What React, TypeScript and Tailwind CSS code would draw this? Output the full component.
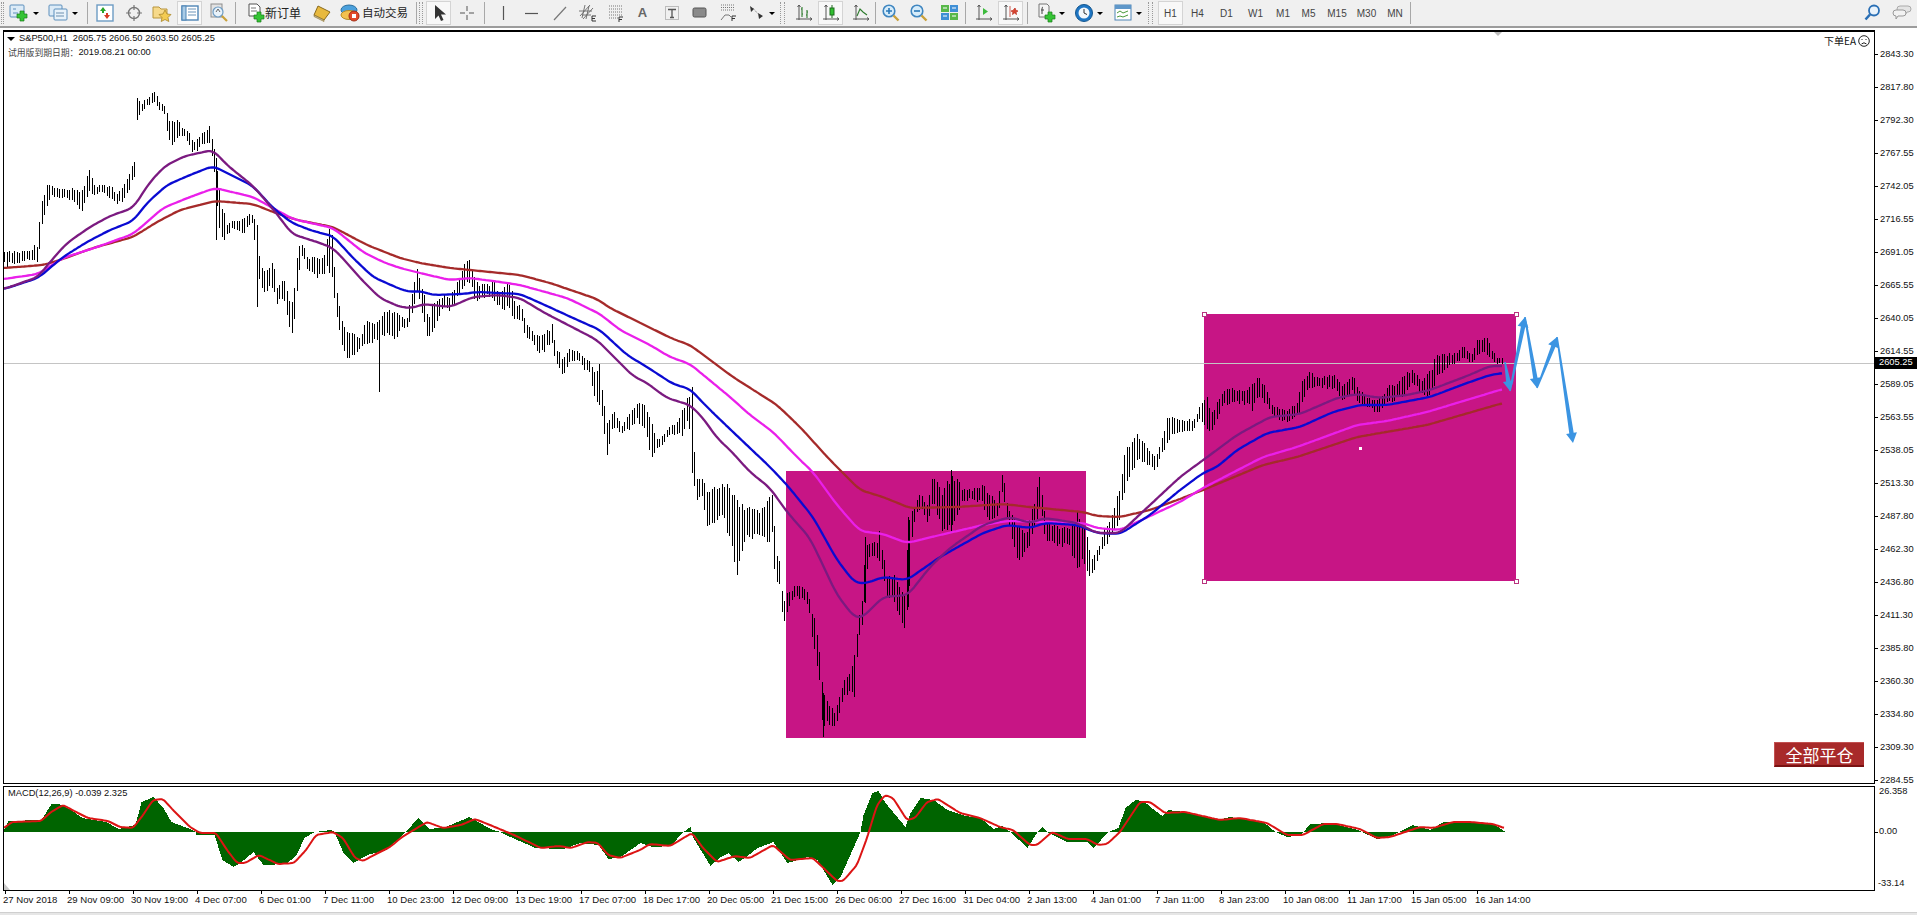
import React from 'react';

type Pt = number[];

// traced from the chart: [x, high, low] in page pixels
const BARS: Pt[] = [
  [4,252,265],[20,252,263],[30,250,258],[37,244,262],[40,205,245],[43,195,218],[47,183,208],[50,185,195],[60,190,197],[70,190,200],[82,190,210],[89,170,193],[95,187,193],[102,185,190],[110,187,198],[117,193,203],[122,188,202],[128,178,193],[134,160,177],
  [137,98,120],[140,103,113],[147,100,105],[154,93,103],[160,103,110],[165,108,117],[168,117,140],[172,123,145],[178,120,137],[183,130,135],[190,135,147],[193,143,153],[200,137,147],[204,132,143],[209,127,145],[213,145,160],[216,158,200],[220,200,238],[223,207,245],[227,223,233],[233,222,228],[243,218,232],[253,215,222],
  [257,225,307],[259,257,280],[263,273,292],[273,262,287],[277,287,303],[283,280,297],[288,297,320],[291,310,340],[295,280,313],[298,243,280],[302,243,255],[307,257,267],[315,255,280],[323,260,273],[328,230,270],[332,227,283],[335,283,307],[340,307,340],[345,330,358],[355,335,355],[360,337,347],[367,320,343],[377,323,340],[387,307,337],[397,313,337],
  [400,317,328],[407,317,328],[412,290,317],[417,270,290],[425,297,328],[428,320,342],[433,303,328],[443,297,307],[450,297,310],[462,268,290],[470,258,280],[475,283,303],[487,285,295],[493,280,300],[500,297,308],[508,278,310],[515,303,320],[522,308,320],[525,320,338],[530,330,340],[540,337,353],[552,325,343],[555,347,362],[563,357,377],[570,350,360],[580,352,360],[583,357,368],[590,363,372],[595,370,408],[600,363,403],[603,397,430],[607,420,457],[613,412,427],[622,425,432],[630,412,428],[638,402,420],[645,402,430],[650,418,460],[657,440,450],[667,430,437],[677,422,433],[682,410,438],[688,397,417],
  [692,387,473],[695,477,500],[702,480,497],[707,490,530],[722,480,520],[730,487,540],[737,500,575],[745,505,540],[760,510,535],[770,495,545],[772,490,538],[775,543,583],[780,563,587],[783,600,628],[788,590,610],[793,588,597],[802,585,597],[808,593,603],[812,612,640],[815,613,662],[820,657,687],[823,693,737],[825,690,720],[830,708,725],[834,710,727],[838,702,717],[843,682,697],[850,672,690],[855,647,700],[858,620,640],[862,600,623],[865,537,603],[868,543,558],[877,543,557],[878,525,557],[883,555,573],[887,577,598],[895,572,603],[898,587,613],[905,593,635],[908,517,607],[913,510,523],[920,493,507],[927,503,522],[933,475,500],[942,490,533],[951,470,532],[962,490,503],[970,490,497],[982,485,503],[988,493,523],[997,503,515],[1002,473,493],[1008,507,523],[1018,527,563],[1027,530,550],[1033,503,535],[1040,473,505],[1045,520,538],[1058,527,547],[1068,528,545],[1077,512,568],[1085,527,567],[1091,560,580],[1097,550,560],[1103,533,547],[1109,522,540],
  [1119,489,520],[1125,447,490],[1137,434,459],[1155,459,470],[1168,416,440],[1180,420,430],[1193,420,430],[1200,407,417],[1207,395,430],[1210,413,438],[1218,400,415],[1225,388,403],[1237,390,402],[1247,390,403],[1252,382,410],[1258,375,397],[1267,393,405],[1273,405,415],[1285,410,422],[1297,403,418],[1302,380,405],[1308,372,388],[1320,378,387],[1332,375,387],[1343,385,400],[1353,375,392],[1358,390,405],[1370,400,407],[1377,400,413],[1387,387,403],[1395,385,400],[1405,373,393],[1413,371,383],[1423,382,395],[1430,370,397],[1437,353,378],[1447,355,367],[1457,353,362],[1463,348,357],[1472,355,362],[1477,339,353],[1487,337,355],[1492,350,358],[1498,358,363],[1504,360,365],
];

const SPIKES: Pt[] = [[216,158,240],[257,225,307],[692,387,473],[908,517,607],[951,470,532],[1077,512,568],[379,320,392],[865,537,603],[737,500,575],[823,693,737]];

const PURPLE: Pt[] = [[4,289],[38,277],[50,262],[67,243],[90,227],[110,216],[133,208],[150,182],[165,166],[185,156],[213,150],[227,165],[253,186],[267,202],[280,218],[292,234],[320,243],[333,248],[347,263],[360,278],[380,298],[400,307],[413,308],[423,304],[450,307],[473,297],[497,295],[520,298],[543,312],[570,326],[597,340],[620,363],[633,376],[647,383],[667,398],[690,405],[703,418],[717,438],[730,450],[750,472],[770,488],[787,512],[810,538],[837,595],[855,618],[863,617],[883,597],[908,595],[930,567],[950,548],[983,525],[1010,517],[1030,523],[1045,518],[1077,523],[1097,533],[1120,533],[1150,505],[1180,477],[1210,455],[1237,435],[1270,417],[1300,414],[1337,398],[1357,394],[1380,398],[1407,395],[1430,390],[1467,376],[1490,366],[1503,366]];
const BLUE: Pt[] = [[4,289],[38,278],[63,257],[87,242],[110,230],[133,221],[147,203],[167,185],[190,175],[213,166],[227,173],[253,186],[273,208],[292,223],[313,231],[333,236],[353,258],[373,277],[400,289],[410,292],[420,291],[433,295],[463,294],[477,292],[520,294],[547,306],[573,318],[600,330],[627,355],[647,367],[673,384],[690,389],[707,407],[733,432],[770,467],[787,485],[813,517],[837,560],[855,583],[867,583],[883,577],[907,580],[940,557],[983,533],[1007,525],[1030,528],[1045,523],[1077,525],[1097,533],[1120,534],[1150,515],[1180,490],[1203,473],[1217,467],[1237,450],[1267,433],[1300,427],[1333,412],[1360,405],[1387,405],[1430,397],[1467,383],[1490,375],[1503,373]];
const MAGENTA: Pt[] = [[4,279],[38,274],[63,258],[97,247],[133,234],[147,222],[163,208],[190,197],[215,188],[253,197],[280,212],[293,219],[333,228],[363,252],[383,262],[400,268],[420,273],[450,280],[470,278],[493,281],[520,285],[567,298],[600,314],[620,330],[650,345],[670,357],[690,364],[730,397],[750,415],[773,432],[800,460],[813,472],[837,505],[860,531],[883,534],[907,543],[940,535],[983,525],[1007,521],[1047,522],[1083,523],[1097,528],[1120,530],[1150,516],[1180,502],[1203,488],[1263,457],[1297,447],[1357,425],[1387,421],[1427,412],[1503,389]];
const BROWN: Pt[] = [[4,268],[43,265],[60,260],[93,248],[133,237],[157,222],[180,210],[215,201],[253,204],[273,212],[297,220],[333,227],[367,245],[400,258],[420,263],[450,268],[490,272],[520,275],[550,283],[597,299],[610,308],[673,339],[690,345],[733,377],[777,405],[800,427],[830,460],[860,490],[883,497],[910,508],[957,507],[1003,504],[1030,507],[1083,512],[1097,516],[1120,517],[1150,510],[1180,499],[1203,490],[1263,465],[1297,457],[1357,437],[1427,425],[1503,403]];

const HIST: Pt[] = [[4,829],[8,821],[41,820],[51,804],[59,804],[69,809],[82,818],[106,822],[118,829],[135,825],[141,802],[153,797],[163,808],[171,822],[192,830],[195,832],[196,835],[214,835],[222,860],[233,867],[241,862],[253,852],[263,865],[286,864],[296,855],[304,838],[314,832],[331,830],[334,832],[343,853],[353,863],[367,855],[386,850],[404,833],[418,818],[429,829],[445,827],[469,817],[490,829],[500,832],[510,837],[535,848],[563,849],[580,843],[598,845],[608,859],[620,857],[640,843],[652,847],[670,846],[683,832],[690,827],[693,838],[710,866],[720,857],[728,853],[738,862],[747,856],[757,848],[773,842],[787,863],[807,857],[817,860],[832,885],[840,877],[853,848],[860,832],[863,815],[872,793],[878,791],[885,803],[905,827],[910,813],[920,798],[933,800],[947,810],[965,816],[980,818],[993,829],[1002,826],[1010,832],[1027,848],[1037,832],[1042,827],[1048,833],[1067,842],[1087,842],[1093,848],[1108,832],[1118,828],[1125,808],[1135,800],[1143,801],[1150,807],[1162,816],[1168,810],[1183,812],[1203,816],[1217,820],[1230,817],[1247,820],[1263,822],[1275,832],[1287,837],[1300,835],[1310,824],[1330,823],[1357,830],[1377,839],[1390,836],[1412,825],[1430,830],[1443,822],[1477,823],[1493,824],[1505,832]];
const SIGNAL: Pt[] = [[4,828],[12,822],[41,821],[51,812],[63,805],[78,813],[88,818],[108,821],[120,827],[133,828],[143,815],[153,800],[163,799],[173,810],[190,827],[200,833],[216,833],[227,850],[237,863],[245,863],[259,855],[278,864],[294,863],[306,850],[316,835],[333,832],[343,838],[355,858],[363,861],[376,854],[390,847],[402,837],[427,822],[443,828],[461,825],[475,819],[490,825],[514,835],[541,848],[559,846],[571,848],[588,842],[598,843],[608,855],[620,858],[640,850],[650,844],[670,846],[692,833],[703,848],[717,862],[735,856],[750,858],[773,845],[790,860],[813,858],[837,881],[843,881],[857,865],[867,838],[877,805],[885,795],[893,798],[907,820],[915,818],[927,802],[938,799],[960,813],[980,818],[1000,827],[1013,830],[1030,845],[1037,845],[1052,832],[1068,839],[1087,839],[1098,845],[1107,844],[1120,832],[1140,802],[1150,802],[1165,813],[1185,812],[1220,820],[1240,818],[1267,823],[1287,835],[1303,835],[1323,824],[1337,824],[1360,829],[1377,838],[1390,837],[1420,827],[1433,828],[1453,822],[1470,822],[1493,824],[1504,828]];

const PRICES = ['2843.30','2817.80','2792.30','2767.55','2742.05','2716.55','2691.05','2665.55','2640.05','2614.55','2589.05','2563.55','2538.05','2513.30','2487.80','2462.30','2436.80','2411.30','2385.80','2360.30','2334.80','2309.30','2284.55'];
const TIMES = ['27 Nov 2018','29 Nov 09:00','30 Nov 19:00','4 Dec 07:00','6 Dec 01:00','7 Dec 11:00','10 Dec 23:00','12 Dec 09:00','13 Dec 19:00','17 Dec 07:00','18 Dec 17:00','20 Dec 05:00','21 Dec 15:00','26 Dec 06:00','27 Dec 16:00','31 Dec 04:00','2 Jan 13:00','4 Jan 01:00','7 Jan 11:00','8 Jan 23:00','10 Jan 08:00','11 Jan 17:00','15 Jan 05:00','16 Jan 14:00'];

const noise = (i: number) => {
  const s = Math.sin(i * 12.9898) * 43758.5453;
  return s - Math.floor(s);
};

const lerp = (pts: Pt[], x: number, col: number) => {
  for (let k = 1; k < pts.length; k++) {
    if (x <= pts[k][0]) {
      const a = pts[k - 1];
      const b = pts[k];
      return a[col] + ((b[col] - a[col]) * (x - a[0])) / (b[0] - a[0] || 1);
    }
  }
  return pts[pts.length - 1][col];
};

const barsPath = () => {
  let d = '';
  for (let i = 0; i < 600; i++) {
    const x = Math.round(4 + i * 2.5);
    if (x > 1504) break;
    const hi = lerp(BARS, x, 1);
    const lo = lerp(BARS, x, 2);
    const mid = (hi + lo) / 2 + (noise(i) - 0.5) * 3;
    const half = ((lo - hi) / 2) * (0.65 + 0.35 * noise(i + 999)) + 1;
    d += `M${x + 0.5} ${Math.round(mid - half)}V${Math.round(mid + half)}`;
  }
  SPIKES.forEach(([x, hi, lo]) => {
    d += `M${x + 0.5} ${hi}V${lo}`;
  });
  return d;
};

const histPath = () => {
  let d = '';
  for (let x = 4; x <= 1505; x++) {
    d += `M${x + 0.5} 832V${Math.round(lerp(HIST, x, 1))}`;
  }
  return d;
};

// resample a traced line and average it, the moving averages have no kinks
const line = (pts: Pt[], win: number) => {
  const out: string[] = [];
  const first = pts[0][0];
  const last = pts[pts.length - 1][0];
  for (let x = first; x <= last; x += 2) {
    let sum = 0;
    let n = 0;
    for (let o = -win; o <= win; o++) {
      const xx = Math.min(last, Math.max(first, x + o));
      sum += lerp(pts, xx, 1);
      n++;
    }
    out.push(`${x},${(sum / n).toFixed(1)}`);
  }
  return out.join(' ');
};

const arrow = (x1: number, y1: number, x2: number, y2: number) => {
  const len = Math.hypot(x2 - x1, y2 - y1);
  const ux = (x2 - x1) / len;
  const uy = (y2 - y1) / len;
  const nx = -uy;
  const ny = ux;
  const bx = x2 - ux * 10;
  const by = y2 - uy * 10;
  return [
    [x1 + nx * 0.8, y1 + ny * 0.8],
    [bx + nx * 2.2, by + ny * 2.2],
    [bx + nx * 5.5, by + ny * 5.5],
    [x2, y2],
    [bx - nx * 5.5, by - ny * 5.5],
    [bx - nx * 2.2, by - ny * 2.2],
    [x1 - nx * 0.8, y1 - ny * 0.8],
  ]
    .map((p) => p.map((n) => n.toFixed(1)).join(','))
    .join(' ');
};

const Handle = ({ x, y }: { x: number; y: number }) => (
  <rect x={x - 2} y={y - 2} width={4} height={4} fill="#fff" stroke="#b8347f" strokeWidth={1} shapeRendering="crispEdges" />
);

const Dd = () => <span className="w-0 h-0 border-x-[3px] border-x-transparent border-t-[3px] border-t-black" />;

const Sep = ({ className }: { className: string }) => <span className={`w-px h-[22px] bg-[#a8a8a8] ${className}`} />;

const Grip = ({ className }: { className: string }) => <span className={`h-[22px] border-x border-dotted border-[#9a9a9a] ${className}`} />;

const Cell = ({ className, on, children }: { className: string; on?: boolean; children?: React.ReactNode }) => (
  <span className={`h-[24px] flex items-center justify-center ${on ? 'border border-[#d4d4d4] bg-[#f8f8f8]' : ''} ${className}`}>{children}</span>
);

const Ico = ({ children, w = 20 }: { children: React.ReactNode; w?: number }) => (
  <svg width={w} height={20} viewBox={`0 0 ${w} 20`} fill="none">
    {children}
  </svg>
);

const Plus = ({ x, y }: { x: number; y: number }) => (
  <path d={`M${x + 3} ${y}h4v3h3v4h-3v3h-4v-3h-3v-4h3z`} fill="#35c435" stroke="#1a7d1a" strokeWidth={0.7} />
);

const Axes = ({ children }: { children?: React.ReactNode }) => (
  <Ico>
    <path d="M5 2v15M2 16h16M5 2l-1.5 2M5 2l1.5 2M18 16l-2-1.5M18 16l-2 1.5" stroke="#555" strokeWidth={1} />
    {children}
  </Ico>
);

const Lens = ({ minus }: { minus?: boolean }) => (
  <Ico>
    <circle cx={8} cy={8} r={5.8} fill="#d6ecfa" stroke="#3f86c0" strokeWidth={1.6} />
    <path d="M12.5 12.5l5 5" stroke="#c9a13a" strokeWidth={2.4} />
    <path d={minus ? 'M5 8h6' : 'M5 8h6M8 5v6'} stroke="#2a78b8" strokeWidth={1.6} />
  </Ico>
);

const Toolbar = () => (
  <div className="h-[28px] flex items-center bg-[#f0f0f0] border-b-2 border-[#9c9c9c] text-[#444] text-[10px] shrink-0">
    <Grip className="w-[3px] ml-[1px]" />
    <Cell className="ml-[2px] w-[25px]">
      <Ico>
        <rect x={1} y={2} width={14} height={12} rx={1} fill="#dcebf7" stroke="#5d8fbc" />
        <path d="M4 6h3M4 10h5" stroke="#5d8fbc" />
        <Plus x={8} y={8} />
      </Ico>
    </Cell>
    <Cell className="w-[10px]"><Dd /></Cell>
    <Cell className="ml-[4px] w-[25px]">
      <Ico>
        <rect x={1} y={2} width={13} height={11} rx={1} fill="#dcebf7" stroke="#5d8fbc" />
        <rect x={6} y={6} width={13} height={11} rx={1} fill="#e8f2fa" stroke="#5d8fbc" />
        <path d="M8 10h8M8 13h8" stroke="#6d8fae" />
      </Ico>
    </Cell>
    <Cell className="w-[10px]"><Dd /></Cell>
    <Sep className="ml-[7px]" />
    <Cell className="ml-[4px] w-[25px]">
      <Ico>
        <rect x={2} y={2} width={16} height={16} fill="#fff" stroke="#6d9cc4" strokeWidth={1.4} />
        <path d="M8 4l3 4H9v2H7V8H5z" fill="#28a428" />
        <path d="M12 16l-3-4h2v-2h2v2h2z" fill="#d83a22" />
      </Ico>
    </Cell>
    <Cell className="ml-[4px] w-[25px]">
      <Ico>
        <circle cx={10} cy={10} r={5.5} stroke="#777" strokeWidth={1.4} />
        <path d="M10 2v5M10 13v5M2 10h5M13 10h5" stroke="#777" strokeWidth={1.2} />
      </Ico>
    </Cell>
    <Cell className="ml-[3px] w-[25px]">
      <Ico>
        <path d="M1 4h6l2 2h6v9H1z" fill="#f6d98a" stroke="#b8953c" />
        <path d="M13 7l2 4 4 .5-3 3 .8 4-3.8-2-3.8 2 .8-4-3-3 4-.5z" fill="#f3cb52" stroke="#a98628" strokeWidth={0.8} />
      </Ico>
    </Cell>
    <Cell on className="ml-[3px] w-[25px]">
      <Ico>
        <rect x={2} y={3} width={16} height={14} fill="#fff" stroke="#4f85b6" strokeWidth={1.4} />
        <rect x={2} y={3} width={4} height={14} fill="#a9cbe6" stroke="#4f85b6" />
        <path d="M8 6h8M8 9h8M8 12h8" stroke="#6a93b8" />
      </Ico>
    </Cell>
    <Cell className="ml-[4px] w-[25px]">
      <Ico>
        <rect x={2} y={1} width={11} height={13} fill="#e3e3e3" stroke="#8d8d8d" />
        <circle cx={9} cy={9} r={5} fill="#e8f2fa" stroke="#6d9cc4" strokeWidth={1.2} />
        <path d="M13 13l5 5" stroke="#c9a13a" strokeWidth={2.2} />
        <path d="M7 9l2-3 2 3" stroke="#666" />
      </Ico>
    </Cell>
    <Sep className="ml-[4px]" />
    <Cell className="ml-[11px] w-[18px]">
      <Ico w={18}>
        <path d="M2 1h8l3 3v9H2z" fill="#fff" stroke="#555" />
        <path d="M4 5h5M4 8h6" stroke="#777" />
        <Plus x={7} y={9} />
      </Ico>
    </Cell>
    <span className="w-[36px] text-[12px] leading-none text-[#222] font-['Noto_Sans_CJK_SC',sans-serif]">新订单</span>
    <Cell className="ml-[12px] w-[18px]">
      <Ico w={18}>
        <path d="M5 3l12 6-6 8-10-5z" fill="#e8b93e" stroke="#8a6a1c" />
        <path d="M1 12l10 5v1.5L1 13.5z" fill="#c9c3a8" stroke="#8a6a1c" strokeWidth={0.6} />
      </Ico>
    </Cell>
    <Cell className="ml-[9px] w-[21px]">
      <Ico w={21}>
        <ellipse cx={9} cy={7} rx={8} ry={5} fill="#4aa0dc" stroke="#2b6f9e" />
        <ellipse cx={9} cy={12} rx={8} ry={4.5} fill="#f2c14e" stroke="#b38a24" />
        <circle cx={14} cy={13} r={5} fill="#e24a2a" stroke="#a32c12" />
        <rect x={12} y={11} width={4} height={4} fill="#fff" />
      </Ico>
    </Cell>
    <span className="ml-[1px] w-[46px] text-[11.5px] leading-none text-[#222] font-['Noto_Sans_CJK_SC',sans-serif]">自动交易</span>
    <Sep className="ml-[8px]" />
    <Grip className="ml-[2px] w-[4px]" />
    <Cell on className="ml-[3px] w-[25px]">
      <Ico>
        <path d="M6 2v14l3.5-3.5 2.5 5.5 2.5-1-2.5-5.5h5z" fill="#333" />
      </Ico>
    </Cell>
    <Cell className="ml-[3px] w-[25px]">
      <Ico>
        <path d="M10 3v5M10 12v5M3 10h5M12 10h5" stroke="#555" />
      </Ico>
    </Cell>
    <Sep className="ml-[5px]" />
    <Cell className="ml-[5px] w-[25px]">
      <Ico><path d="M10.5 3v14" stroke="#555" strokeWidth={1.2} /></Ico>
    </Cell>
    <Cell className="ml-[4px] w-[25px]">
      <Ico><path d="M3 10.5h13" stroke="#555" strokeWidth={1.2} /></Ico>
    </Cell>
    <Cell className="ml-[3px] w-[25px]">
      <Ico><path d="M4 17L16 4" stroke="#777" strokeWidth={1.2} /></Ico>
    </Cell>
    <Cell className="ml-[3px] w-[25px]">
      <Ico>
        <path d="M2 13L12 2M5 16L15 5M1 8h13M4 12h9M7 2l-3 13M11 3l-3 13" stroke="#666" strokeWidth={0.9} />
        <path d="M14 13h4M14 15.5h3M14 18h4M14 13v5" stroke="#333" strokeWidth={1} />
      </Ico>
    </Cell>
    <Cell className="ml-[3px] w-[25px]">
      <Ico>
        <path d="M3 3h14M3 6h14M3 9h14M3 12h14M3 15h9" stroke="#777" strokeDasharray="1 1" />
        <path d="M13 14h4M13 16.5h3M13 14v5" stroke="#333" />
      </Ico>
    </Cell>
    <Cell className="ml-[2px] w-[25px] font-['Liberation_Sans',sans-serif] text-[13px] font-bold text-[#666]">A</Cell>
    <Cell className="ml-[4px] w-[25px]">
      <Ico>
        <rect x={3.5} y={3.5} width={13} height={13} stroke="#888" strokeDasharray="1 1" />
        <path d="M6 6.5h8M10 6.5v8M8 14.5h4" stroke="#555" strokeWidth={1.3} />
      </Ico>
    </Cell>
    <Cell className="ml-[2px] w-[25px]">
      <Ico><rect x={4} y={5} width={13} height={9} rx={1.5} fill="#8a8a8a" stroke="#555" /></Ico>
    </Cell>
    <Cell className="ml-[4px] w-[25px]">
      <Ico>
        <path d="M3 2h14M3 4.5h14M3 7h14" stroke="#777" strokeDasharray="1 1" />
        <path d="M3 17l4-5h4l2 2" stroke="#777" />
        <path d="M14 13h4M14 15.5h3M14 13v5" stroke="#333" />
      </Ico>
    </Cell>
    <Cell className="ml-[3px] w-[25px]">
      <Ico>
        <path d="M4 3l4 3-3 3zM12 10l5 3-4 3z" fill="#333" />
        <path d="M7 5l5 6" stroke="#777" strokeDasharray="1 1" />
      </Ico>
    </Cell>
    <Cell className="w-[8px]"><Dd /></Cell>
    <Grip className="ml-[4px] w-[5px]" />
    <Cell className="ml-[6px] w-[25px]">
      <Axes><path d="M8 4v10M7 6h1M8 11h1M13 7v8M12 12h1M13 9h1" stroke="#2c7a2c" strokeWidth={1.1} /></Axes>
    </Cell>
    <Cell on className="ml-[2px] w-[25px]">
      <Axes>
        <path d="M11 2v13" stroke="#1f6b1f" />
        <rect x={9} y={5} width={4} height={7} fill="#2fbf2f" stroke="#1f6b1f" />
      </Axes>
    </Cell>
    <Cell className="ml-[5px] w-[25px]">
      <Axes><path d="M6 13l3-7 3 3 4 3" stroke="#2c7a2c" strokeWidth={1.1} /></Axes>
    </Cell>
    <Sep className="ml-[2px]" />
    <Cell className="ml-[2px] w-[25px]"><Lens /></Cell>
    <Cell className="ml-[3px] w-[25px]"><Lens minus /></Cell>
    <Cell className="ml-[6px] w-[25px]">
      <Ico>
        <rect x={1} y={2} width={8} height={7} fill="#58b84a" />
        <rect x={10} y={2} width={8} height={7} fill="#3f8fd6" />
        <rect x={1} y={10} width={8} height={7} fill="#3f8fd6" />
        <rect x={10} y={10} width={8} height={7} fill="#58b84a" />
        <path d="M3 5h4M12 5h4M3 13h4M12 13h4" stroke="#fff" />
      </Ico>
    </Cell>
    <Sep className="ml-[3px]" />
    <Cell className="ml-[5px] w-[25px]">
      <Axes><path d="M9 5v7l5-3.5z" fill="#3dbb3d" /></Axes>
    </Cell>
    <Cell on className="ml-[2px] w-[25px]">
      <Axes><path d="M14 5l1 2.5 2 .5-2 1 .5 2.5-2-1.5-2 1.5.5-2.5-2-1 2-.5zM9 3v11" stroke="#c0392b" fill="#d9442f" strokeWidth={0.8} /></Axes>
    </Cell>
    <Sep className="ml-[4px]" />
    <Cell className="ml-[5px] w-[25px]">
      <Ico>
        <path d="M3 1h8l2 2v11H3z" fill="#f5f5f5" stroke="#777" />
        <path d="M7 4q-1 0-1 2v5M5 7h3" stroke="#444" />
        <Plus x={9} y={9} />
      </Ico>
    </Cell>
    <Cell className="w-[8px]"><Dd /></Cell>
    <Cell className="ml-[5px] w-[25px]">
      <Ico>
        <circle cx={10} cy={10} r={8.5} fill="#1f76c4" stroke="#14578f" />
        <circle cx={10} cy={10} r={5.5} fill="#f4f8fb" />
        <path d="M10 6v4l3 1.5" stroke="#333" />
      </Ico>
    </Cell>
    <Cell className="w-[8px]"><Dd /></Cell>
    <Cell className="ml-[6px] w-[25px]">
      <Ico>
        <rect x={2} y={2} width={16} height={15} fill="#fff" stroke="#4f85b6" />
        <rect x={2} y={2} width={16} height={4} fill="#5f97c9" />
        <path d="M4 10l3-2 3 2 5-2M4 14l3-1 3 1 5-2" stroke="#4a9a3a" />
      </Ico>
    </Cell>
    <Cell className="w-[8px]"><Dd /></Cell>
    <Grip className="ml-[5px] w-[5px]" />
    <Cell on className="ml-[5px] w-[25px] font-['Liberation_Sans',sans-serif]">H1</Cell>
    <Cell className="w-[29px] font-['Liberation_Sans',sans-serif]">H4</Cell>
    <Cell className="w-[29px] font-['Liberation_Sans',sans-serif]">D1</Cell>
    <Cell className="w-[29px] font-['Liberation_Sans',sans-serif]">W1</Cell>
    <Cell className="w-[26px] font-['Liberation_Sans',sans-serif]">M1</Cell>
    <Cell className="w-[25px] font-['Liberation_Sans',sans-serif]">M5</Cell>
    <Cell className="w-[32px] font-['Liberation_Sans',sans-serif]">M15</Cell>
    <Cell className="w-[27px] font-['Liberation_Sans',sans-serif]">M30</Cell>
    <Cell className="w-[30px] font-['Liberation_Sans',sans-serif]">MN</Cell>
    <Sep className="" />
    <Cell className="ml-auto w-[24px]">
      <Ico>
        <circle cx={12} cy={7.5} r={5} fill="#eaf3fb" stroke="#2a6fb5" strokeWidth={1.8} />
        <path d="M8 11.5L3.5 16.5" stroke="#2a6fb5" strokeWidth={2.6} />
      </Ico>
    </Cell>
    <Cell className="ml-[6px] mr-[3px] w-[24px]">
      <Ico w={22}>
        <path d="M9 3h8q3 0 3 3t-3 3h-1l-2 3v-3H9q-3 0-3-3t3-3z" fill="#e4e4e4" stroke="#aaa" />
        <path d="M5 7h7q3 0 3 3t-3 3H7l-2 3v-3q-3 0-3-3t3-3z" fill="#f2f2f2" stroke="#999" />
      </Ico>
    </Cell>
  </div>
);

const MainChart = () => (
  <div className="relative w-[1872px] h-[754px] box-border border border-black border-t-2">
    <svg className="block" width={1870} height={751} viewBox="4 32 1870 751">
      <rect x={786} y={471} width={300} height={267} fill="#c71585" />
      <rect x={1204} y={314} width={312} height={267} fill="#c71585" />
      <path d="M4 363.5H1874" stroke="#c4c4c4" strokeWidth={1} shapeRendering="crispEdges" />
      <path d={barsPath()} stroke="#000" strokeWidth={1} shapeRendering="crispEdges" />
      <polyline points={line(BROWN, 6)} fill="none" stroke="#a52a2a" strokeWidth={2.3} strokeLinejoin="round" />
      <polyline points={line(MAGENTA, 6)} fill="none" stroke="#ea1fea" strokeWidth={2.3} strokeLinejoin="round" />
      <polyline points={line(BLUE, 6)} fill="none" stroke="#0a0ad2" strokeWidth={2.3} strokeLinejoin="round" />
      <polyline points={line(PURPLE, 6)} fill="none" stroke="#7b1a80" strokeWidth={2.3} strokeLinejoin="round" />
      <Handle x={1204} y={314} />
      <Handle x={1516} y={314} />
      <Handle x={1204} y={581} />
      <Handle x={1516} y={581} />
      <rect x={1359} y={447} width={3} height={3} fill="#fff" />
      <polygon points={arrow(1505, 362, 1510, 391)} fill="#3b94e2" />
      <polygon points={arrow(1510, 391, 1525, 317)} fill="#3b94e2" />
      <polygon points={arrow(1525, 317, 1537, 388)} fill="#3b94e2" />
      <polygon points={arrow(1537, 388, 1557, 337)} fill="#3b94e2" />
      <polygon points={arrow(1557, 337, 1573, 443)} fill="#3b94e2" />
      <path d="M1494 32h8l-4 4z" fill="#bbb" />
    </svg>
    <div className="absolute left-[3px] top-[1px] flex items-center h-[12px] text-[9.3px] leading-none text-[#111]">
      <span className="w-0 h-0 border-x-[4px] border-x-transparent border-t-[4px] border-t-black" />
      <span className="ml-[4px] whitespace-pre">S&amp;P500,H1  2605.75 2606.50 2603.50 2605.25</span>
    </div>
    <div className="absolute left-[4px] top-[15px] h-[12px] flex items-center text-[9.3px] leading-none text-[#111]">
      <span className="text-[#444] text-[8.8px] font-['Noto_Sans_CJK_SC',sans-serif]">试用版到期日期：</span>
      <span>2019.08.21 00:00</span>
    </div>
    <div className="absolute right-[4px] top-[2px] h-[14px] flex items-center text-[10px] leading-none text-[#111]">
      <span className="font-['Noto_Sans_CJK_SC',sans-serif]">下单EA</span>
      <svg className="ml-[2px]" width={12} height={12} viewBox="0 0 12 12" fill="none">
        <circle cx={6} cy={6} r={5.3} stroke="#222" />
        <path d="M4 4v1M8 4v1" stroke="#222" />
        <path d="M3.5 9q2.5-2.5 5 0" stroke="#222" />
      </svg>
    </div>
    <div className="absolute right-[10px] bottom-[16px] w-[90px] h-[25px] flex items-center justify-center bg-[#a82a2a] border-t border-l border-[#c25050] border-r-[#7a1212] border-b-2 border-b-[#7a1212] text-white text-[17px] leading-none font-['Noto_Sans_CJK_SC',sans-serif]">
      全部平仓
    </div>
  </div>
);

const PriceAxis = () => (
  <div className="relative w-[43px] h-[754px] pt-[8px] flex flex-col text-[9.3px] leading-none text-[#111]">
    {PRICES.map((p) => (
      <div key={p} className="h-[33px] shrink-0 flex items-center">
        <span className="w-[3px] h-px bg-black" />
        <span className="ml-[2px]">{p}</span>
      </div>
    ))}
    <div className="absolute left-0 top-[327px] w-[42px] h-[12px] flex items-center pl-[4px] bg-black text-white">2605.25</div>
  </div>
);

const MacdChart = () => (
  <div className="relative w-[1872px] h-[105px] box-border border border-black">
    <svg className="block" width={1870} height={103} viewBox="4 787 1870 103">
      <path d={histPath()} stroke="#006400" strokeWidth={1} shapeRendering="crispEdges" />
      <polyline points={line(SIGNAL, 2)} fill="none" stroke="#dc1414" strokeWidth={2} strokeLinejoin="round" />
      <path d="M4 890v-7l6 7z" fill="#c8c8c8" />
    </svg>
    <div className="absolute left-[4px] top-[1px] h-[12px] flex items-center text-[9.3px] leading-none text-[#111]">MACD(12,26,9) -0.039 2.325</div>
  </div>
);

const MacdAxis = () => (
  <div className="w-[43px] h-[105px] flex flex-col text-[9.3px] leading-none text-[#111]">
    <div className="h-[12px] flex items-center pl-[4px]">26.358</div>
    <div className="mt-[28px] h-[12px] flex items-center">
      <span className="w-[3px] h-px bg-black" />
      <span className="ml-px">0.00</span>
    </div>
    <div className="mt-[40px] h-[12px] flex items-center pl-[3px]">-33.14</div>
  </div>
);

const TimeAxis = () => (
  <div className="h-[21px] flex pl-[3px] text-[9.6px] leading-[12px] text-[#111]">
    {TIMES.map((t) => (
      <div key={t} className="w-[64px] shrink-0 flex flex-col">
        <span className="w-px h-[3px] ml-[2px] bg-black" />
        <span className="whitespace-nowrap">{t}</span>
      </div>
    ))}
  </div>
);

export default function App() {
  return (
    <div className="w-[1917px] h-[915px] overflow-hidden bg-white flex flex-col font-['Liberation_Sans','Noto_Sans_CJK_SC',sans-serif]">
      <Toolbar />
      <div className="pt-[2px] pl-[3px] flex">
        <MainChart />
        <PriceAxis />
      </div>
      <div className="pt-[2px] pl-[3px] flex">
        <MacdChart />
        <MacdAxis />
      </div>
      <TimeAxis />
      <div className="h-[3px] bg-[#e6e6e6] border-t border-[#cfcfcf]" />
    </div>
  );
}
